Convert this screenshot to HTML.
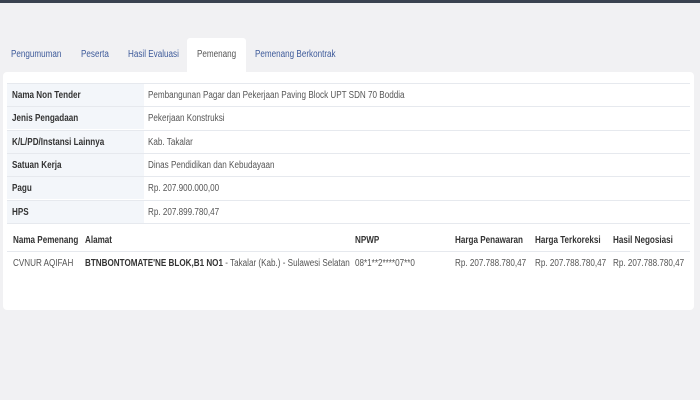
<!DOCTYPE html>
<html><head><meta charset="utf-8"><style>
*{margin:0;padding:0;box-sizing:border-box}
body{width:700px;height:400px;background:#f1f1f3;font-family:"Liberation Sans",sans-serif;font-size:10px;color:#444;position:relative;overflow:hidden}
.top{position:absolute;left:0;top:0;width:700px;height:3px;background:#3a4250}
.n{display:inline-block;white-space:nowrap;transform:scaleX(.81);transform-origin:0 0}
.tab{position:absolute;top:49px;color:#3d5a9a;font-size:10px;white-space:nowrap;transform:scaleX(.81);transform-origin:0 0}
.act{position:absolute;left:187px;top:38px;width:59px;height:36px;background:#fff;border-radius:3px 3px 0 0}
.panel{position:absolute;left:3px;top:72px;width:691px;height:238px;background:#fff;border-radius:4px}
.row{position:absolute;left:7px;width:683px;height:23px;border-top:1px solid #e6e9ee}
.row .l{position:absolute;left:0;top:0;width:137px;height:22px;background:#f3f6fa;padding:6px 0 0 5px}
.row .l span{font-weight:bold;color:#333}
.row .v{position:absolute;left:141px;top:6px;color:#555}
.t{position:absolute;font-size:10px;white-space:nowrap;transform:scaleX(.81);transform-origin:0 0}
.h{font-weight:bold;color:#333}
</style></head><body>
<div class="top"></div>
<div class="act"></div>
<div class="tab" style="left:11px">Pengumuman</div>
<div class="tab" style="left:81px">Peserta</div>
<div class="tab" style="left:128px">Hasil Evaluasi</div>
<div class="tab" style="left:197px;color:#555">Pemenang</div>
<div class="tab" style="left:255px">Pemenang Berkontrak</div>
<div class="panel"></div>
<div class="row" style="top:83px"><div class="l"><span class="n">Nama Non Tender</span></div><div class="v n">Pembangunan Pagar dan Pekerjaan Paving Block UPT SDN 70 Boddia</div></div>
<div class="row" style="top:106px"><div class="l"><span class="n">Jenis Pengadaan</span></div><div class="v n">Pekerjaan Konstruksi</div></div>
<div class="row" style="top:130px"><div class="l"><span class="n">K/L/PD/Instansi Lainnya</span></div><div class="v n">Kab. Takalar</div></div>
<div class="row" style="top:153px"><div class="l"><span class="n">Satuan Kerja</span></div><div class="v n">Dinas Pendidikan dan Kebudayaan</div></div>
<div class="row" style="top:176px"><div class="l"><span class="n">Pagu</span></div><div class="v n">Rp. 207.900.000,00</div></div>
<div class="row" style="top:200px"><div class="l"><span class="n">HPS</span></div><div class="v n">Rp. 207.899.780,47</div></div>
<div class="row" style="top:223px;height:1px"></div>
<div class="t h" style="left:13px;top:235px">Nama Pemenang</div>
<div class="t h" style="left:85px;top:235px">Alamat</div>
<div class="t h" style="left:355px;top:235px">NPWP</div>
<div class="t h" style="left:455px;top:235px">Harga Penawaran</div>
<div class="t h" style="left:535px;top:235px">Harga Terkoreksi</div>
<div class="t h" style="left:613px;top:235px">Hasil Negosiasi</div>
<div style="position:absolute;left:7px;top:251px;width:683px;border-top:1px solid #e6e9ee"></div>
<div class="t" style="left:13px;top:258px;color:#555">CVNUR AQIFAH</div>
<div class="t" style="left:85px;top:258px;color:#555"><b style="color:#333">BTNBONTOMATE'NE BLOK,B1 NO1</b> - Takalar (Kab.) - Sulawesi Selatan</div>
<div class="t" style="left:355px;top:258px;color:#555">08*1**2****07**0</div>
<div class="t" style="left:455px;top:258px;color:#555">Rp. 207.788.780,47</div>
<div class="t" style="left:535px;top:258px;color:#555">Rp. 207.788.780,47</div>
<div class="t" style="left:613px;top:258px;color:#555">Rp. 207.788.780,47</div>
</body></html>
